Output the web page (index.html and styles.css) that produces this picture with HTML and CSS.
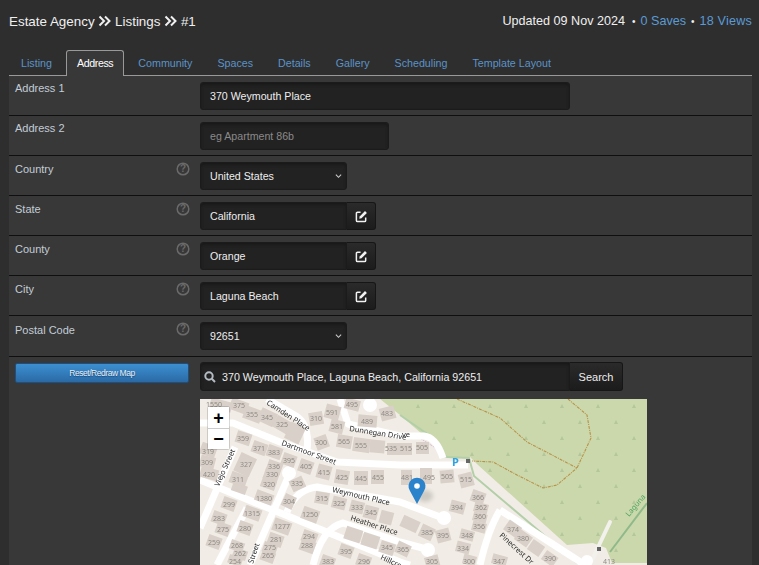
FILE: index.html
```html
<!DOCTYPE html>
<html lang="en">
<head>
    <meta charset="UTF-8">
    <meta name="viewport" content="width=device-width, initial-scale=1.0">
    <title>Estate Agency - Listings #1</title>
    <link rel="stylesheet" href="styles.css">
</head>
<body>
<div class="page">
    <header class="top-bar">
        <h1 class="crumbs">
            Estate Agency
            <svg class="crumb-sep" viewBox="0 0 13 12"><path d="M1.5 1.5 6 6l-4.500 4.500M7 1.500 11.500 6 7 10.500"/></svg>
            Listings
            <svg class="crumb-sep" viewBox="0 0 13 12"><path d="M1.5 1.5 6 6l-4.500 4.500M7 1.500 11.500 6 7 10.500"/></svg>
            #1
        </h1>
        <div class="stats">
            <span>Updated 09 Nov 2024</span>
            <span class="dot">&bull;</span>
            <a href="#">0 Saves</a>
            <span class="dot">&bull;</span>
            <a href="#">18 Views</a>
        </div>
    </header>

    <nav class="tabs">
        <a href="#">Listing</a>
        <a href="#" class="active">Address</a>
        <a href="#">Community</a>
        <a href="#">Spaces</a>
        <a href="#">Details</a>
        <a href="#">Gallery</a>
        <a href="#">Scheduling</a>
        <a href="#">Template Layout</a>
    </nav>

    <section class="panel">
        <!-- Address lines -->
        <div class="row plain">
            <label class="row-label">Address 1</label>
            <input class="field wide" type="text" value="370 Weymouth Place">
        </div>
        <div class="row plain">
            <label class="row-label">Address 2</label>
            <input class="field mid" type="text" placeholder="eg Apartment 86b">
        </div>

        <!-- Location pickers -->
        <div class="row">
            <label class="row-label">Country <svg class="help" viewBox="0 0 14 14"><circle cx="7" cy="7" r="5.800"/><text x="7" y="10.300" text-anchor="middle">?</text></svg></label>
            <div class="select-wrap">
                <select class="field"><option>United States</option></select>
                <svg class="caret" viewBox="0 0 8 6"><path d="M1 1.500 4 4.500 7 1.500"/></svg>
            </div>
        </div>
        <div class="row">
            <label class="row-label">State <svg class="help" viewBox="0 0 14 14"><circle cx="7" cy="7" r="5.800"/><text x="7" y="10.300" text-anchor="middle">?</text></svg></label>
            <div class="input-group">
                <input class="field" type="text" value="California">
                <button class="addon" type="button"><svg class="edit" viewBox="0 0 14 14"><path class="edit-box" d="M6 2.500H2.700A1.200 1.200 0 0 0 1.500 3.700v7.600a1.200 1.200 0 0 0 1.200 1.200h7.600a1.200 1.200 0 0 0 1.200-1.200V8"/><path class="edit-pen" d="M5 7 10.800 1.200 12.800 3.200 7 9 4.600 9.400Z"/></svg></button>
            </div>
        </div>
        <div class="row">
            <label class="row-label">County <svg class="help" viewBox="0 0 14 14"><circle cx="7" cy="7" r="5.800"/><text x="7" y="10.300" text-anchor="middle">?</text></svg></label>
            <div class="input-group">
                <input class="field" type="text" value="Orange">
                <button class="addon" type="button"><svg class="edit" viewBox="0 0 14 14"><path class="edit-box" d="M6 2.500H2.700A1.200 1.200 0 0 0 1.500 3.700v7.600a1.200 1.200 0 0 0 1.200 1.200h7.600a1.200 1.200 0 0 0 1.200-1.200V8"/><path class="edit-pen" d="M5 7 10.800 1.200 12.800 3.200 7 9 4.600 9.400Z"/></svg></button>
            </div>
        </div>
        <div class="row">
            <label class="row-label">City <svg class="help" viewBox="0 0 14 14"><circle cx="7" cy="7" r="5.800"/><text x="7" y="10.300" text-anchor="middle">?</text></svg></label>
            <div class="input-group">
                <input class="field" type="text" value="Laguna Beach">
                <button class="addon" type="button"><svg class="edit" viewBox="0 0 14 14"><path class="edit-box" d="M6 2.500H2.700A1.200 1.200 0 0 0 1.500 3.700v7.600a1.200 1.200 0 0 0 1.200 1.200h7.600a1.200 1.200 0 0 0 1.200-1.200V8"/><path class="edit-pen" d="M5 7 10.800 1.200 12.800 3.200 7 9 4.600 9.400Z"/></svg></button>
            </div>
        </div>
        <div class="row postal">
            <label class="row-label">Postal Code <svg class="help" viewBox="0 0 14 14"><circle cx="7" cy="7" r="5.800"/><text x="7" y="10.300" text-anchor="middle">?</text></svg></label>
            <div class="select-wrap">
                <select class="field"><option>92651</option></select>
                <svg class="caret" viewBox="0 0 8 6"><path d="M1 1.500 4 4.500 7 1.500"/></svg>
            </div>
        </div>

        <!-- Map -->
        <div class="map-row">
            <div class="map-side">
                <button class="reset-btn" type="button">Reset/Redraw Map</button>
            </div>
            <div class="map-main">
                <div class="search-group">
                    <div class="search-box">
                        <svg class="search-icon" viewBox="0 0 12 12"><circle cx="5" cy="5" r="3.700"/><path d="M7.800 7.800 11 11"/></svg>
                        <input type="text" value="370 Weymouth Place, Laguna Beach, California 92651">
                    </div>
                    <button class="search-btn" type="button">Search</button>
                </div>
                <div class="map">
                    <svg class="map-art" viewBox="200 399 447 166">
                        <defs>
                            <pattern id="trees" x="372" y="399" width="36" height="32" patternUnits="userSpaceOnUse">
                                <path class="tree" d="M10 5 12 9H8ZM28 21 30 25H26Z"/>
                            </pattern>
                        </defs>
                        <rect class="land" x="200" y="399" width="447" height="166"/>
                        <path class="park" d="M380 399H647V563H612L606 548 593 543 567 545 478 465 470 457H447L443 452 400 415Z"/>
                        <path class="park-trees" d="M380 399H647V563H612L606 548 593 543 567 545 478 465 470 457H447L443 452 400 415Z"/>
                        <path class="park-edge" d="M400 415 436 440 443 455 447 457 469 458 474 476 577 563"/>
                        <path class="park-edge dark" d="M610 552 647 503"/>
                        <path class="boundary" d="M415 435 442 452"/>
                        <path class="trail" d="M457 399 500 418 527 442 577 468"/>
                        <path class="trail" d="M568 399 587 415 591 438 577 468 557 485 543 488 517 475 493 462 472 461"/>

                        <g class="roads">
                            <path d="M200 423H233L280 442 337 462 400 465H468"/>
                            <path d="M340 399 348 424 400 436H424Q436 437 443 458"/>
                            <path d="M267 399 296 416Q310 425 307 450"/>
                            <path d="M287 512Q296 489 317 487L400 502 443 518"/>
                            <path d="M313 565Q322 528 343 523L400 542 430 550"/>
                            <path d="M200 480 400 562 410 565"/>
                            <path d="M290 473 250 565"/>
                            <path d="M235 447 200 528"/>
                            <path d="M247 508 217 565"/>
                            <path d="M500 510Q488 530 480 565"/>
                            <path d="M500 510 585 565"/>
                            <path d="M610 522 592 560" class="track"/>
                        </g>
                        <g class="caps">
                            <circle cx="289" cy="473" r="7"/><circle cx="370" cy="405" r="7"/>
                            <circle cx="444" cy="518" r="7"/><circle cx="428" cy="550" r="7"/>
                            <circle cx="587" cy="561" r="6"/>
                        </g>

                        <g class="houses">
                            <rect x="210" y="400" width="22" height="10" transform="rotate(15 221 405)"/>
                            <rect x="230" y="400" width="18" height="12" transform="rotate(20 239 406)"/>
                            <rect x="244" y="408" width="18" height="13" transform="rotate(20 253 414)"/>
                            <rect x="259" y="410" width="17" height="14" transform="rotate(25 267 417)"/>
                            <rect x="274" y="418" width="17" height="13" transform="rotate(30 282 424)"/>
                            <rect x="287" y="424" width="16" height="18" transform="rotate(25 295 433)"/>
                            <rect x="309" y="412" width="14" height="13" transform="rotate(-10 316 418)"/>
                            <rect x="325" y="405" width="15" height="14" transform="rotate(15 332 412)"/>
                            <rect x="330" y="420" width="14" height="13" transform="rotate(15 337 426)"/>
                            <rect x="345" y="399" width="15" height="11" transform="rotate(15 352 404)"/>
                            <rect x="358" y="415" width="19" height="12" transform="rotate(5 367 421)"/>
                            <rect x="380" y="407" width="15" height="13" transform="rotate(-15 387 413)"/>
                            <rect x="315" y="436" width="13" height="13" transform="rotate(-20 321 442)"/>
                            <rect x="337" y="435" width="15" height="13" transform="rotate(10 344 441)"/>
                            <rect x="353" y="438" width="17" height="14" transform="rotate(8 361 445)"/>
                            <rect x="370" y="440" width="15" height="13" transform="rotate(5 378 444)"/>
                            <rect x="387" y="443" width="14" height="12"/>
                            <rect x="401" y="443" width="11" height="12"/>
                            <rect x="416" y="442" width="13" height="12"/>
                            <rect x="236" y="432" width="15" height="12" transform="rotate(18 243 438)"/>
                            <rect x="252" y="442" width="15" height="12" transform="rotate(20 259 448)"/>
                            <rect x="267" y="446" width="15" height="12" transform="rotate(20 274 452)"/>
                            <rect x="282" y="454" width="14" height="12" transform="rotate(20 289 460)"/>
                            <rect x="299" y="460" width="14" height="13" transform="rotate(20 306 466)"/>
                            <rect x="317" y="465" width="14" height="14" transform="rotate(15 324 472)"/>
                            <rect x="335" y="470" width="14" height="14" transform="rotate(10 342 477)"/>
                            <rect x="354" y="471" width="14" height="14"/>
                            <rect x="371" y="470" width="13" height="14"/>
                            <rect x="401" y="470" width="11" height="15"/>
                            <rect x="420" y="468" width="12" height="16"/>
                            <rect x="440" y="470" width="14" height="13" transform="rotate(-5 447 476)"/>
                            <rect x="459" y="473" width="14" height="14" transform="rotate(-15 466 479)"/>
                            <rect x="200" y="444" width="16" height="12" transform="rotate(20 208 451)"/>
                            <rect x="200" y="456" width="15" height="12" transform="rotate(15 207 462)"/>
                            <rect x="200" y="468" width="18" height="11" transform="rotate(15 209 474)"/>
                            <rect x="237" y="455" width="17" height="20" transform="rotate(25 246 464)"/>
                            <rect x="230" y="473" width="17" height="12" transform="rotate(20 238 479)"/>
                            <rect x="232" y="484" width="15" height="9" transform="rotate(20 240 488)"/>
                            <rect x="267" y="461" width="15" height="12" transform="rotate(20 274 467)"/>
                            <rect x="264" y="470" width="15" height="11" transform="rotate(20 272 475)"/>
                            <rect x="261" y="479" width="15" height="10" transform="rotate(20 269 484)"/>
                            <rect x="290" y="478" width="14" height="12" transform="rotate(-25 297 483)"/>
                            <rect x="283" y="495" width="12" height="13" transform="rotate(25 289 501)"/>
                            <rect x="255" y="492" width="18" height="11" transform="rotate(20 264 498)"/>
                            <rect x="315" y="492" width="14" height="12" transform="rotate(10 322 498)"/>
                            <rect x="332" y="497" width="14" height="12" transform="rotate(15 339 503)"/>
                            <rect x="350" y="501" width="14" height="12" transform="rotate(15 357 507)"/>
                            <rect x="364" y="506" width="14" height="13" transform="rotate(15 371 512)"/>
                            <rect x="380" y="511" width="13" height="13" transform="rotate(15 386 517)"/>
                            <rect x="302" y="508" width="17" height="13" transform="rotate(20 310 514)"/>
                            <rect x="222" y="498" width="14" height="12" transform="rotate(20 229 504)"/>
                            <rect x="212" y="512" width="14" height="12" transform="rotate(20 219 518)"/>
                            <rect x="244" y="507" width="17" height="12" transform="rotate(20 252 513)"/>
                            <rect x="238" y="522" width="14" height="12" transform="rotate(20 245 528)"/>
                            <rect x="216" y="523" width="14" height="12" transform="rotate(20 223 529)"/>
                            <rect x="207" y="536" width="14" height="12" transform="rotate(20 214 542)"/>
                            <rect x="230" y="541" width="14" height="10" transform="rotate(20 237 546)"/>
                            <rect x="233" y="549" width="14" height="10" transform="rotate(20 240 554)"/>
                            <rect x="228" y="556" width="14" height="9" transform="rotate(20 235 561)"/>
                            <rect x="273" y="520" width="18" height="13" transform="rotate(20 282 526)"/>
                            <rect x="268" y="534" width="15" height="12" transform="rotate(20 276 540)"/>
                            <rect x="263" y="543" width="14" height="11" transform="rotate(20 270 548)"/>
                            <rect x="261" y="551" width="14" height="11" transform="rotate(20 268 556)"/>
                            <rect x="302" y="531" width="15" height="12" transform="rotate(20 309 537)"/>
                            <rect x="300" y="540" width="15" height="12" transform="rotate(20 307 546)"/>
                            <rect x="345" y="528" width="17" height="13" transform="rotate(18 353 534)"/>
                            <rect x="362" y="534" width="17" height="13" transform="rotate(18 370 540)"/>
                            <rect x="380" y="542" width="15" height="12" transform="rotate(18 387 547)"/>
                            <rect x="339" y="545" width="14" height="12" transform="rotate(20 346 551)"/>
                            <rect x="321" y="556" width="14" height="12" transform="rotate(20 328 561)"/>
                            <rect x="357" y="555" width="14" height="12" transform="rotate(20 364 560)"/>
                            <rect x="401" y="518" width="18" height="12" transform="rotate(25 410 524)"/>
                            <rect x="420" y="526" width="14" height="13" transform="rotate(25 427 532)"/>
                            <rect x="436" y="529" width="14" height="13" transform="rotate(-15 443 535)"/>
                            <rect x="396" y="543" width="14" height="12" transform="rotate(25 403 549)"/>
                            <rect x="425" y="556" width="14" height="11" transform="rotate(-15 432 561)"/>
                            <rect x="450" y="501" width="15" height="12" transform="rotate(15 457 507)"/>
                            <rect x="471" y="491" width="14" height="12" transform="rotate(20 478 497)"/>
                            <rect x="474" y="503" width="14" height="10" transform="rotate(15 481 508)"/>
                            <rect x="473" y="513" width="14" height="9" transform="rotate(15 480 517)"/>
                            <rect x="472" y="522" width="14" height="10" transform="rotate(15 479 527)"/>
                            <rect x="460" y="530" width="14" height="10" transform="rotate(15 467 535)"/>
                            <rect x="456" y="542" width="14" height="11" transform="rotate(15 463 548)"/>
                            <rect x="463" y="555" width="13" height="10" transform="rotate(15 469 560)"/>
                            <rect x="492" y="555" width="15" height="10" transform="rotate(15 499 560)"/>
                            <rect x="505" y="523" width="15" height="12" transform="rotate(35 513 529)"/>
                            <rect x="516" y="532" width="15" height="12" transform="rotate(35 523 538)"/>
                            <rect x="529" y="542" width="14" height="12" transform="rotate(35 536 548)"/>
                            <rect x="543" y="553" width="14" height="11" transform="rotate(35 550 558)"/>
                        </g>

                        <g class="nums">
                            <text x="214" y="407">1550</text><text x="239" y="408">375</text><text x="252" y="417">355</text><text x="267" y="420">345</text><text x="282" y="427">325</text>
                            <text x="316" y="421">310</text><text x="332" y="415">591</text><text x="337" y="429">581</text><text x="352" y="407">495</text><text x="367" y="424">489</text>
                            <text x="387" y="416">483</text><text x="321" y="445">300</text><text x="344" y="444">565</text><text x="361" y="448">555</text><text x="391" y="451">535</text>
                            <text x="406" y="451">515</text><text x="422" y="450">505</text><text x="243" y="441">359</text><text x="259" y="451">371</text><text x="274" y="455">383</text>
                            <text x="289" y="463">395</text><text x="306" y="469">405</text><text x="324" y="475">415</text><text x="342" y="480">425</text><text x="361" y="481">445</text>
                            <text x="378" y="480">455</text><text x="407" y="480">481</text><text x="429" y="480">495</text><text x="447" y="479">505</text><text x="466" y="482">515</text>
                            <text x="208" y="454">319</text><text x="207" y="465">309</text><text x="209" y="477">420</text><text x="246" y="467">327</text><text x="238" y="482">311</text>
                            <text x="274" y="469">336</text><text x="272" y="477">330</text><text x="269" y="487">320</text><text x="297" y="486">335</text><text x="289" y="504">304</text>
                            <text x="264" y="501">1380</text><text x="322" y="501">315</text><text x="339" y="506">325</text><text x="357" y="510">333</text><text x="371" y="515">345</text>
                            <text x="310" y="517">1250</text><text x="229" y="507">299</text><text x="219" y="521">283</text><text x="252" y="516">1315</text><text x="245" y="531">280</text>
                            <text x="223" y="532">275</text><text x="214" y="545">259</text><text x="237" y="548">268</text><text x="240" y="556">262</text><text x="235" y="564">254</text>
                            <text x="282" y="529">1277</text><text x="276" y="542">281</text><text x="270" y="550">275</text><text x="268" y="558">265</text><text x="309" y="539">294</text>
                            <text x="307" y="548">288</text><text x="387" y="550">345</text><text x="346" y="554">395</text><text x="364" y="564">296</text><text x="328" y="564">383</text>
                            <text x="427" y="535">385</text><text x="443" y="538">395</text><text x="403" y="552">365</text><text x="432" y="564">305</text><text x="457" y="510">394</text>
                            <text x="478" y="500">366</text><text x="481" y="510">362</text><text x="480" y="519">360</text><text x="479" y="529">356</text><text x="467" y="538">348</text>
                            <text x="463" y="551">334</text><text x="469" y="564">300</text><text x="499" y="564">347</text><text x="513" y="532">374</text><text x="523" y="541">380</text>
                            <text x="550" y="561">390</text><text x="609" y="564">413</text>
                        </g>

                        <g class="street-names">
                            <text transform="translate(266 404) rotate(33)">Camden Place</text>
                            <text transform="translate(349 431) rotate(9)">Dunnegan Drive</text>
                            <text transform="translate(281 445) rotate(20)">Dartmoor Street</text>
                            <text transform="translate(219 487) rotate(-66)">Viejo Street</text>
                            <text transform="translate(332 492) rotate(13)">Weymouth Place</text>
                            <text transform="translate(350 520) rotate(18)">Heather Place</text>
                            <text transform="translate(499 536) rotate(42)">Pinecrest Dr</text>
                            <text transform="translate(380 559) rotate(25)">Hillcrest</text>
                            <text transform="translate(253 564) rotate(-72)">Street</text>
                            <text transform="translate(402 437)">ve</text>
                            <text class="park-name" transform="translate(629 517) rotate(-50)">Laguna</text>
                        </g>

                        <text class="parking" x="452" y="466">P</text>
                        <rect class="gate" x="466" y="459" width="4" height="4"/>
                        <rect class="gate" x="597" y="547" width="4" height="4"/>

                        <ellipse class="pin-shadow" cx="425" cy="496" rx="8" ry="6"/>
                        <path class="pin" d="M417 504 410 491A8.500 8.500 0 1 1 424 491Z"/>
                        <circle class="pin-dot" cx="417" cy="486" r="2.800"/>
                    </svg>
                    <div class="zoom-ctl">
                        <button type="button">+</button>
                        <button type="button">&minus;</button>
                    </div>
                </div>
            </div>
        </div>
    </section>
</div>
</body>
</html>
```

FILE: styles.css
```css
html, body {
    margin: 0;
    padding: 0;
    background-color: #2e2e2e;
}
body {
    font-family: "Liberation Sans", Arial, sans-serif;
    font-size: 11px;
    color: #fff;
}
a {
    text-decoration: none;
}
.page {
    height: 100vh;
    overflow: hidden;
    padding: 0 7px 0 9px;
    box-sizing: border-box;
}

/* header */
.top-bar {
    display: flex;
    justify-content: space-between;
    align-items: center;
    height: 50px;
    padding-bottom: 8px;
    box-sizing: border-box;
}
.crumbs {
    margin: 0;
    font-size: 13.400px;
    font-weight: normal;
    color: #f0f0f0;
}
.crumb-sep {
    width: 13px;
    height: 12px;
    vertical-align: -1px;
}
.crumb-sep path {
    fill: none;
    stroke: #f0f0f0;
    stroke-width: 2;
}
.stats {
    display: flex;
    gap: 5px;
    align-items: center;
    font-size: 12.600px;
    color: #f0f0f0;
}
.stats a {
    color: #5b9bd5;
}
.stats a:last-child {
    letter-spacing: 0.200px;
}
.dot {
    font-size: 10px;
}
.stats span:first-child {
    margin-right: 2px;
}

/* tabs */
.tabs {
    display: flex;
    height: 26px;
    padding-left: 1px;
    font-size: 10.700px;
    border-bottom: 1px solid #999;
    box-sizing: border-box;
}
.tabs a {
    height: 26px;
    margin-right: 3px;
    padding: 0 10px;
    line-height: 24px;
    color: #5b93c9;
    border: 1px solid transparent;
    border-bottom: 0;
    box-sizing: border-box;
}
.tabs a.active {
    color: #fff;
    letter-spacing: -0.400px;
    background-color: #383838;
    border-color: #999;
    border-radius: 3px 3px 0 0;
}

/* form rows */
.panel {
    background-color: #383838;
    min-height: 500px;
}
.row {
    display: flex;
    height: 40px;
    padding-top: 6px;
    border-bottom: 1px solid #0f0f0f;
    box-sizing: border-box;
}
.row.postal {
    height: 41px;
}
.row-label {
    display: flex;
    justify-content: space-between;
    width: 174px;
    margin: 0 11px 0 6px;
    padding-top: 1px;
    color: #c3ccd6;
}
.row.plain .row-label {
    padding-top: 0;
}
.row.postal .row-label {
    padding-top: 2px;
}
.help {
    width: 14px;
    height: 14px;
    margin: -1px -1px 0 0;
}
.row.postal .help {
    margin-top: -2px;
}
.help circle {
    fill: none;
    stroke: #6a6a6a;
    stroke-width: 1.500;
}
.help text {
    fill: #6a6a6a;
    font-size: 10px;
    font-weight: bold;
}
.field {
    height: 28px;
    padding: 0 9px;
    font: 10.650px "Liberation Sans", Arial, sans-serif;
    color: #eee;
    background-color: #222;
    border: 1px solid #1b1b1b;
    border-radius: 3px;
    box-shadow: inset 0 2px 3px #191919;
    box-sizing: border-box;
    outline: 0;
}
.field::placeholder {
    color: #8a8a8a;
}
.field.wide {
    width: 370px;
}
.field.mid {
    width: 189px;
}
.select-wrap {
    position: relative;
    width: 147px;
}
.select-wrap select {
    width: 100%;
    appearance: none;
}
.caret {
    position: absolute;
    top: 11px;
    right: 5px;
    width: 7px;
    height: 6px;
    pointer-events: none;
}
.caret path {
    fill: none;
    stroke: #ccc;
    stroke-width: 1.200;
}
.input-group {
    display: flex;
}
.input-group .field {
    width: 147px;
    border-radius: 3px 0 0 3px;
}
.addon {
    width: 29px;
    height: 28px;
    padding: 0;
    background: linear-gradient(#2a2a2a, #1c1c1c);
    border: 1px solid #161616;
    border-left: 0;
    border-radius: 0 3px 3px 0;
}
.edit {
    display: block;
    width: 13px;
    height: 13px;
    margin: auto;
}
.edit-box {
    fill: none;
    stroke: #f2f2f2;
    stroke-width: 1.600;
}
.edit-pen {
    fill: #f2f2f2;
}

/* map row */
.map-row {
    display: flex;
    padding-top: 5px;
}
.map-side {
    width: 174px;
    margin: 1px 11px 0 6px;
}
.reset-btn {
    display: block;
    width: 100%;
    height: 20px;
    padding: 0;
    font: 8.500px "Liberation Sans", Arial, sans-serif;
    letter-spacing: -0.450px;
    color: #e6eef6;
    text-shadow: 0 1px 1px #1a4a78;
    background: linear-gradient(#3d8fd1, #2a6aa5);
    border: 1px solid #1d4f80;
    border-radius: 2px;
}
.search-group {
    display: flex;
    height: 29px;
}
.search-box {
    display: flex;
    align-items: center;
    width: 370px;
    background-color: #222;
    border: 1px solid #1b1b1b;
    border-radius: 3px 0 0 3px;
    box-shadow: inset 0 2px 3px #191919;
    box-sizing: border-box;
}
.search-icon {
    width: 12px;
    height: 12px;
    margin: 0 6px 0 3px;
    flex: none;
}
.search-icon circle, .search-icon path {
    fill: none;
    stroke: #b5bcc4;
    stroke-width: 2;
}
.search-box input {
    flex: 1;
    min-width: 0;
    padding: 0;
    font: 10.700px "Liberation Sans", Arial, sans-serif;
    color: #eee;
    background: none;
    border: 0;
    outline: 0;
}
.search-btn {
    width: 53px;
    padding: 0;
    font: 11px "Liberation Sans", Arial, sans-serif;
    color: #eee;
    background: linear-gradient(#2a2a2a, #1c1c1c);
    border: 1px solid #161616;
    border-left: 0;
    border-radius: 0 3px 3px 0;
}

/* map */
.map {
    position: relative;
    width: 447px;
    height: 166px;
    margin-top: 8px;
}
.map-art {
    display: block;
    width: 447px;
    height: 166px;
    font-family: "Noto Sans", "Open Sans", sans-serif;
    filter: blur(0.300px);
}
.land {
    fill: #f1ede6;
}
.park {
    fill: #cbd8ab;
}
.park-trees {
    fill: url(#trees);
}
.tree {
    fill: #b4c79a;
}
.park-edge {
    fill: none;
    stroke: #b3cfa8;
    stroke-width: 2;
}
.park-edge.dark {
    stroke: #8fb98a;
}
.boundary {
    fill: none;
    stroke: #c9a8c8;
    stroke-width: 0.700;
    stroke-dasharray: 2 1;
}
.trail {
    fill: none;
    stroke: #b8924a;
    stroke-width: 1.100;
    stroke-dasharray: 3 1 1 1;
}
.roads path {
    fill: none;
    stroke: #fff;
    stroke-width: 7;
    stroke-linejoin: round;
}
.roads path.track {
    stroke: #f3f1ec;
    stroke-width: 4;
    stroke-linecap: round;
}
.caps circle {
    fill: #fff;
}
.houses rect {
    fill: #d9d0c9;
}
.nums text {
    font-size: 7px;
    fill: #8f8a85;
    text-anchor: middle;
}
.street-names text {
    font-size: 7.500px;
    fill: #2a2a2a;
}
.street-names text.park-name {
    fill: #4fa55f;
}
.parking {
    font-size: 11px;
    font-weight: bold;
    fill: #2ea3e0;
}
.gate {
    fill: #666;
}
.pin-shadow {
    fill: #000;
    opacity: 0.150;
    filter: blur(2px);
}
.pin {
    fill: #2b83cb;
}
.pin-dot {
    fill: #fff;
}
.zoom-ctl {
    position: absolute;
    top: 8px;
    left: 8px;
    width: 21px;
    background-color: #fff;
    border-radius: 2px;
    box-shadow: 0 0 0 1px rgba(0, 0, 0, 0.15);
}
.zoom-ctl button {
    display: block;
    width: 21px;
    height: 21px;
    padding: 0;
    font: bold 18px/20px "Liberation Sans", Arial, sans-serif;
    color: #000;
    background: #fff;
    border: 0;
}
.zoom-ctl button + button {
    border-top: 1px solid #ccc;
}
```
